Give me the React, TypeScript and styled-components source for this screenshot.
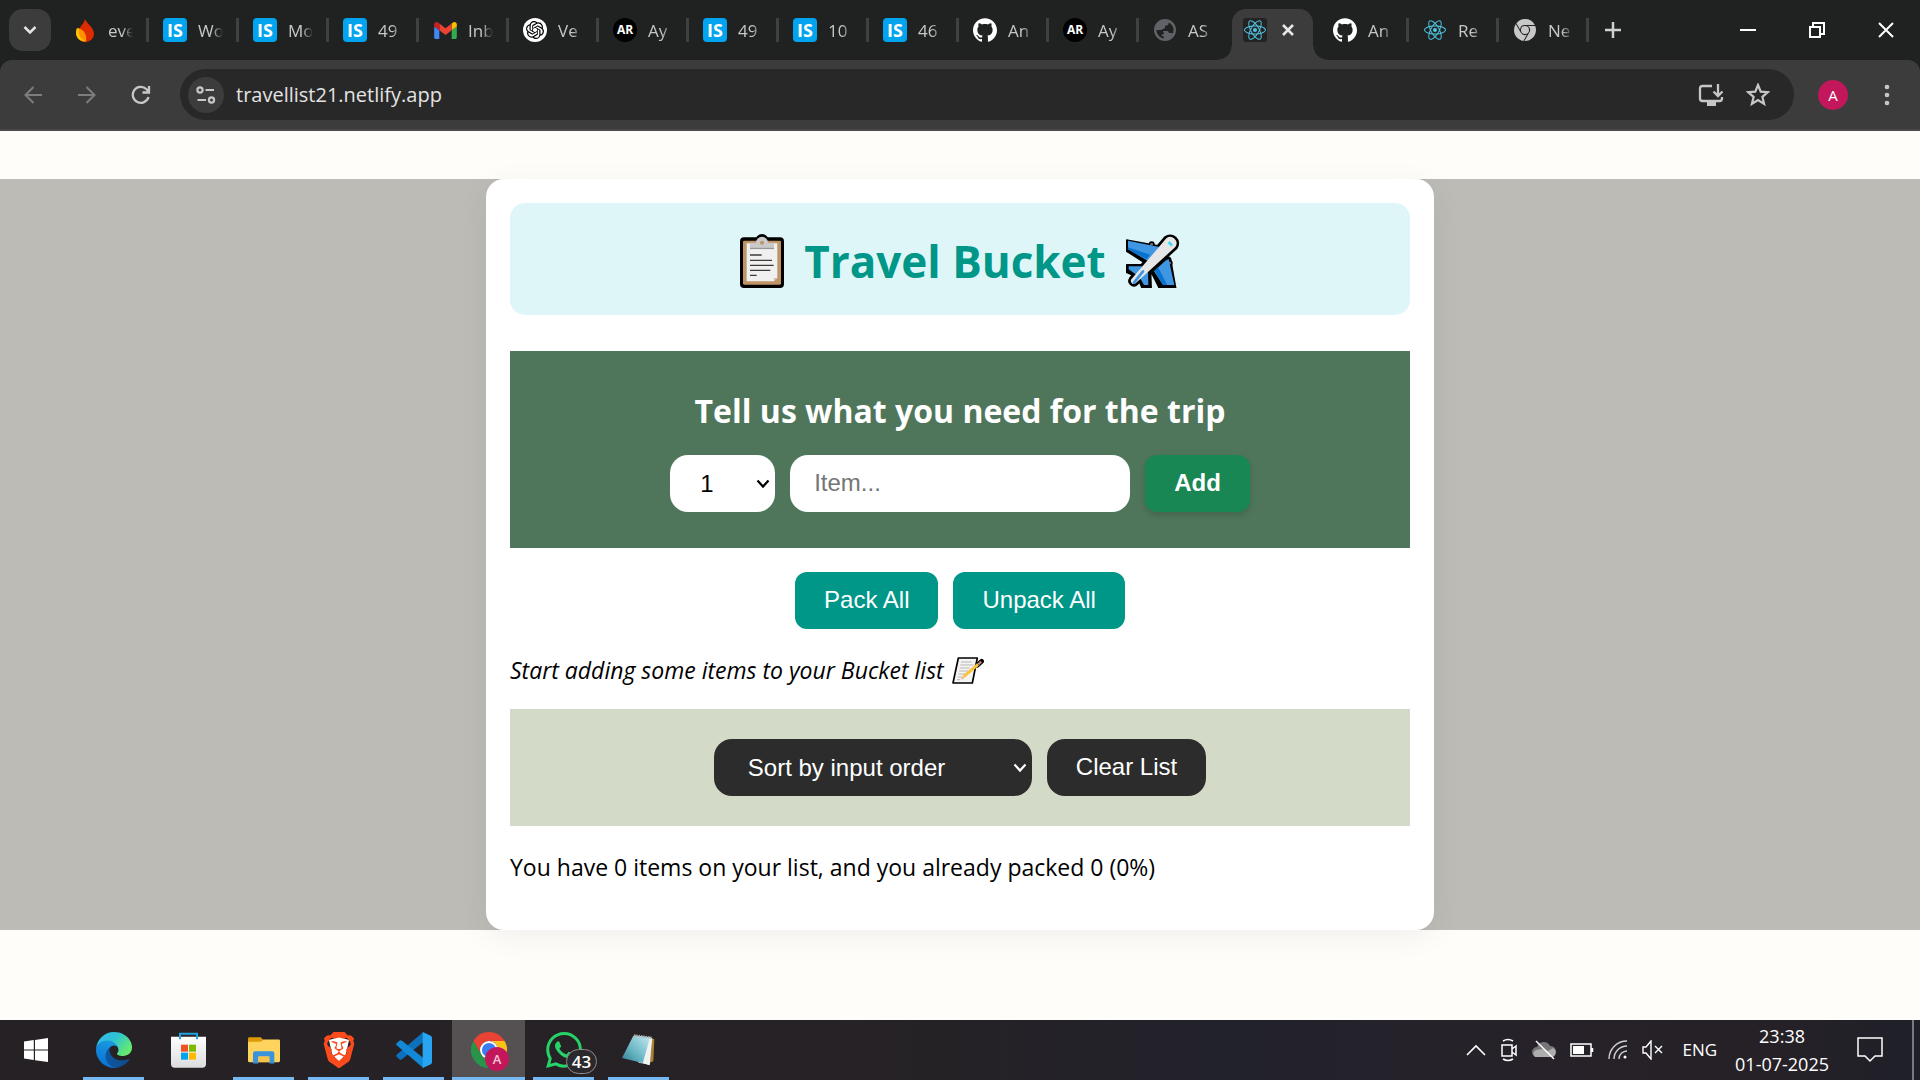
import React from "react";
import styled, { createGlobalStyle, css } from "styled-components";
import { SiBrave, SiGithub, SiGooglechrome, SiOpenai, SiReact, SiWhatsapp } from "react-icons/si";

const ui = `"Segoe UI", "Open Sans", "Noto Sans", sans-serif`;
const arial = `Arial, "Liberation Sans", sans-serif`;

const GlobalStyle = createGlobalStyle`
  *, *::before, *::after { box-sizing: border-box; }
  body { margin: 0; background: #fefdf9; font-family: ${ui}; color: #000; }
  button, input, select { margin: 0; border: 0; font: inherit; color: inherit; }
  button { background: none; padding: 0; cursor: pointer; }
  svg { display: block; flex: none; }
  h1, h2, p { margin: 0; }
`;

const Screen = styled.div`
  min-height: 100vh;
  display: flex;
  flex-direction: column;
`;

/* ---------- Browser chrome ---------- */

const TabStrip = styled.div`
  display: flex;
  align-items: center;
  height: 60px;
  background: #202222;
  color: #c7c7c7;
`;

const TabSearch = styled.button`
  display: grid;
  place-items: center;
  width: 42px;
  height: 42px;
  margin: 0 8px 0 9px;
  border-radius: 14px;
  background: #3c3c3c;
  color: #e3e3e3;
`;

const Tabs = styled.div`
  display: flex;
  align-self: stretch;
`;

const Tab = styled.button<{ $divider?: boolean }>`
  display: flex;
  align-items: center;
  gap: 11px;
  width: 90px;
  padding-left: 14px;
  font-size: 17px;
  line-height: 24px;
  background: ${(p) =>
    p.$divider
      ? "linear-gradient(#3f4141, #3f4141) right center / 3px 24px no-repeat"
      : "none"};
`;

const ActiveTab = styled.div`
  position: relative;
  display: flex;
  align-items: center;
  gap: 14px;
  width: 81px;
  height: 51px;
  margin: 9px 6px 0 3px;
  padding: 0 0 9px 11px;
  border-radius: 14px 14px 0 0;
  background: #3c3c3c;
  color: #e8e8e8;

  &::before,
  &::after {
    content: "";
    position: absolute;
    bottom: 0;
    width: 14px;
    height: 14px;
  }
  &::before {
    right: 100%;
    background: radial-gradient(circle at 0 0, transparent 13px, #3c3c3c 14px);
  }
  &::after {
    left: 100%;
    background: radial-gradient(circle at 100% 0, transparent 13px, #3c3c3c 14px);
  }
`;

const TabTitle = styled.span`
  width: 28px;
  margin-top: 2px;
  text-align: left;
  white-space: nowrap;
  mask-image: linear-gradient(90deg, #000 50%, transparent 90%);
`;

const Favicon = styled.span<{ $bg?: string; $radius?: number; $color?: string }>`
  display: grid;
  place-items: center;
  flex: none;
  width: 24px;
  height: 24px;
  border-radius: ${(p) => p.$radius ?? 0}px;
  background: ${(p) => p.$bg ?? "none"};
  color: ${(p) => p.$color ?? "#fff"};
`;

const Monogram = styled.span<{ $small?: boolean }>`
  font-family: "Open Sans", sans-serif;
  font-size: ${(p) => (p.$small ? 12 : 18)}px;
  font-weight: 700;
  line-height: 24px;
`;

const NewTab = styled.button`
  display: grid;
  place-items: center;
  width: 48px;
  color: #d0d0d0;
`;

const WindowControls = styled.div`
  display: flex;
  margin-left: auto;
  align-self: stretch;
  color: #fff;
`;

const WindowButton = styled.button`
  display: grid;
  place-items: center;
  width: 69px;
`;

const ToolbarBack = styled.div`
  background: #202222;
`;

const Toolbar = styled.div`
  display: flex;
  align-items: center;
  height: 71px;
  padding: 0 18px 0 6px;
  border-bottom: 2px solid #4a4a4a;
  border-radius: 12px 12px 0 0;
  background: #3c3c3c;
  color: #c7c7c7;
`;

const NavButton = styled.button<{ $dim?: boolean }>`
  display: grid;
  place-items: center;
  width: 54px;
  height: 42px;
  color: ${(p) => (p.$dim ? "#7d7d7d" : "#c7c7c7")};
`;

const Omnibox = styled.div`
  display: flex;
  align-items: center;
  flex: 1;
  height: 51px;
  margin-left: 12px;
  padding: 0 24px 0 8px;
  border-radius: 26px;
  background: #282828;
`;

const SiteInfo = styled.button`
  display: grid;
  place-items: center;
  width: 36px;
  height: 36px;
  margin-right: 12px;
  border-radius: 50%;
  background: #3c3c3c;
`;

const Address = styled.input`
  flex: 1;
  min-width: 0;
  padding: 0;
  background: none;
  color: #e3e3e3;
  font-size: 20px;
  line-height: 30px;
  outline: 0;
`;

const OmniboxActions = styled.div`
  display: flex;
  align-items: center;
  gap: 22px;
`;

const Avatar = styled.button`
  width: 30px;
  height: 30px;
  margin: 0 24px;
  border-radius: 50%;
  background: #c2185b;
  color: #fff;
  font-size: 15px;
  line-height: 30px;
`;

/* ---------- Page ---------- */

const Page = styled.main`
  flex: 1;
  padding: 48px 0;
  background: #fefdf9;
`;

const Band = styled.div`
  background: #bdbbb6;
`;

const Card = styled.div`
  max-width: 948px;
  margin: 0 auto;
  padding: 24px;
  border-radius: 18px;
  background: #fff;
  box-shadow: 0 6px 30px rgba(0, 0, 0, 0.06);
`;

const Header = styled.header`
  padding: 26px 24px 22px;
  border-radius: 15px;
  background: #dff6f9;
`;

const Title = styled.h1`
  display: flex;
  align-items: center;
  justify-content: center;
  gap: 20px;
  height: 64px;
  color: #009688;
  font-size: 44px;
  line-height: 64px;
  font-weight: 700;
`;

const AddForm = styled.form`
  margin-top: 36px;
  padding: 36px 24px;
  background: #4f765a;
`;

const FormTitle = styled.h2`
  margin-bottom: 20px;
  color: #fff;
  font-size: 32px;
  line-height: 48px;
  font-weight: 700;
  text-align: center;
`;

const Row = styled.div`
  display: flex;
  justify-content: center;
  flex-wrap: wrap;
  gap: 15px;
`;

const Actions = styled(Row)`
  margin: 24px 0;
`;

const controlBase = css`
  height: 57px;
  font-family: ${arial};
  font-size: 24px;
  line-height: 28px;
`;

const SelectBox = styled.div<{ $dark?: boolean }>`
  position: relative;
  color: ${(p) => (p.$dark ? "#fff" : "#000")};
`;

const Select = styled.select<{ $dark?: boolean }>`
  ${controlBase}
  appearance: none;
  width: ${(p) => (p.$dark ? 318 : 105)}px;
  padding: 0 30px 0 ${(p) => (p.$dark ? 34 : 30)}px;
  border-radius: 18px;
  background: ${(p) => (p.$dark ? "#2c2c2c" : "#fff")};
`;

const SelectArrow = styled.svg`
  position: absolute;
  top: 24px;
  right: 5px;
  pointer-events: none;
`;

const ItemInput = styled.input`
  ${controlBase}
  width: 340px;
  padding: 0 24px 2px;
  border-radius: 18px;
  background: #fff;

  &::placeholder {
    color: #757575;
    opacity: 1;
  }
`;

const Button = styled.button<{ $tone: "add" | "teal" | "dark" }>`
  ${controlBase}
  padding: 0 29px 2px;
  color: #fff;
  ${(p) =>
    ({
      add: css`
        border-radius: 12px;
        background: #198754;
        font-weight: 700;
        box-shadow: 0 3px 6px rgba(0, 0, 0, 0.15);
      `,
      teal: css`
        border-radius: 12px;
        background: #009688;
      `,
      dark: css`
        border-radius: 18px;
        background: #2c2c2c;
      `,
    })[p.$tone]}
`;

const Message = styled.p<{ $italic?: boolean }>`
  display: flex;
  align-items: center;
  gap: 8px;
  margin: 25px 0 23px;
  font-size: 23px;
  line-height: 32px;
  font-style: ${(p) => (p.$italic ? "italic" : "normal")};
`;

const SortBar = styled(Row)`
  padding: 30px;
  background: #d3dac8;
`;

/* ---------- Taskbar ---------- */

const Taskbar = styled.footer`
  display: flex;
  height: 60px;
  background: linear-gradient(90deg, #262124 0%, #262225 45%, #22222c 65%, #272229 80%, #262127 92%, #1f2029 100%);
  color: #fff;
`;

const StartButton = styled.button`
  display: grid;
  place-items: center;
  width: 72px;
`;

const Apps = styled.div`
  display: flex;
  gap: 2px;
  padding-left: 5px;
`;

const AppButton = styled.button<{ $running?: boolean; $active?: boolean }>`
  position: relative;
  display: grid;
  place-items: center;
  width: 73px;
  background: ${(p) => (p.$active ? "#555153" : "none")};

  &::after {
    content: "";
    position: absolute;
    bottom: 0;
    left: ${(p) => (p.$active ? 0 : 6)}px;
    right: ${(p) => (p.$active ? 0 : 6)}px;
    height: 3px;
    background: ${(p) => (p.$running ? "#76b9f2" : "none")};
  }
`;

const AccountBadge = styled.span`
  position: absolute;
  right: 16px;
  bottom: 9px;
  width: 24px;
  height: 24px;
  border-radius: 50%;
  background: #c2185b;
  color: #f3c6d8;
  font-size: 13px;
  line-height: 24px;
  font-weight: 600;
`;

const CountBadge = styled.span`
  position: absolute;
  right: 3px;
  bottom: 6px;
  width: 31px;
  height: 25px;
  border: 1px solid #8d8b8c;
  border-radius: 13px;
  background: #2b292b;
  font-size: 17px;
  line-height: 23px;
  font-weight: 600;
`;

const Tray = styled.div`
  display: flex;
  align-items: center;
  margin-left: auto;
`;

const TrayIcons = styled.div`
  display: flex;
  align-items: center;
  gap: 14px;
`;

const Language = styled.button`
  margin-left: 18px;
  font-size: 17px;
  line-height: 24px;
`;

const Clock = styled.div`
  margin: 0 28px 0 18px;
  font-size: 18px;
  line-height: 28px;
  text-align: center;
`;

const ShowDesktop = styled.button`
  align-self: stretch;
  width: 8px;
  margin-left: 29px;
  border-left: 2px solid #7c7a7d;
`;

/* ---------- Drawings ---------- */

const Line = ({ w, h, box, d, sw = 2 }: { w: number; h: number; box?: string; d: string; sw?: number }) => (
  <svg width={w} height={h} viewBox={box ?? `0 0 ${w} ${h}`} fill="none" stroke="currentColor" strokeWidth={sw}>
    <path d={d} />
  </svg>
);

const Flame = () => (
  <svg width="18" height="23" viewBox="0 0 18 23">
    <path d="M9 0C10 4 18 8 18 15a8.500 8 0 0 1-9 8C4 23 1 19 2 13 3 8 8 5 9 0z" fill="#dd2c00" />
    <path d="M1 9c5 1 9 4 9 13.500C4 23 0 19 0 14c0-2 .3-4 1-5z" fill="#ffc400" />
    <path d="M3 9.500c5 2 8 6 7 12.500-3-1-6-3-7-7z" fill="#ff9100" />
  </svg>
);

const Gmail = () => (
  <svg width="23" height="17" viewBox="52 42 88 66">
    <path fill="#4285f4" d="M58 108h14V74L52 59v43c0 3.320 2.690 6 6 6" />
    <path fill="#34a853" d="M120 108h14c3.320 0 6-2.690 6-6V59l-20 15" />
    <path fill="#fbbc04" d="M120 48v26l20-15v-8c0-7.420-8.470-11.650-14.400-7.200" />
    <path fill="#ea4335" d="M72 74V48l24 18 24-18v26L96 92" />
    <path fill="#c5221f" d="M52 51v8l20 15V48l-5.600-4.200c-5.940-4.450-14.400-.220-14.400 7.200" />
  </svg>
);

const Globe = () => (
  <svg width="22" height="22" viewBox="0 0 22 22">
    <circle cx="11" cy="11" r="9.800" fill="none" stroke="#5f6368" strokeWidth="2.400" />
    <path d="M11 1l4 2-1 3-3 1v2l-4 2H2c0-6 4-10 9-10z" fill="#5f6368" />
    <path d="M9 12h5l1 2h4l-3 5-6 2v-3l-3-2 3-1z" fill="#5f6368" />
  </svg>
);

const Clipboard = () => (
  <svg width="44" height="54" viewBox="0 0 132 162" role="img" aria-label="Clipboard">
    <rect y="10" width="132" height="152" rx="12" />
    <circle cx="66" cy="20" r="20" />
    <rect x="9" y="20" width="114" height="132" rx="4" fill="#bf9467" />
    <path d="M20 28h92v104l-10 10H20z" fill="#f0f0f0" />
    <path d="M112 132l-10 10v-10z" fill="#c8b8a8" />
    <path d="M30 26h18a18 18 0 0 1 36 0h18v20H30z" fill="#cacaca" />
    <path d="M30 43h72" stroke="#8c8c8c" strokeWidth="3" />
    <circle cx="66" cy="26" r="6" fill="#bf9467" />
    <path d="M30 63h35M30 79h66M30 94h71M30 109h61M30 124h20" stroke="#3b3b3b" strokeWidth="4" />
  </svg>
);

const Airplane = () => (
  <svg width="54" height="54" viewBox="0 0 162 162" role="img" aria-label="Airplane">
    <g stroke="#000" strokeWidth="16" strokeLinejoin="round">
      <path d="M4 24l90 17-32 42L4 46zM118 84l10-8 16 90h-36L84 118zM4 98h42l-16 24L4 110zM42 132l26-20 2 54H56z" />
      <path d="M148 39L29 148a9 9 0 0 1-13-12L121 13a19 19 0 0 1 27 26z" />
    </g>
    <circle cx="77" cy="31" r="9" />
    <circle cx="131" cy="87" r="9" />
    <circle cx="77" cy="31" r="4" fill="#777" />
    <circle cx="131" cy="87" r="4" fill="#777" />
    <path d="M6 20l94 19-34 42L6 46z" fill="#3f97e3" />
    <path d="M6 40l66 22-10 14L6 46z" fill="#0873cf" />
    <path d="M118 80l10-5 17 78h-34L84 112z" fill="#3f97e3" />
    <path d="M96 100l28 53h-13L86 110z" fill="#0873cf" />
    <path d="M8 97h42l-18 26L8 106zM42 132l24-22 1 43H54z" fill="#3f97e3" />
    <path d="M148 39L29 148a9 9 0 0 1-13-12L121 13a19 19 0 0 1 27 26z" fill="#e6e6e6" />
    <path d="M51 112L24 146" stroke="#3f97e3" strokeWidth="8" strokeLinecap="round" />
    <path d="M128 24l10 11" stroke="#3fd8fb" strokeWidth="8" />
  </svg>
);

const Memo = () => (
  <svg width="32" height="27" viewBox="0 0 96 81" role="img" aria-label="Memo">
    <path d="M19 3h57L61 78H3z" fill="#f4f4f4" stroke="#000" strokeWidth="5" strokeLinejoin="round" />
    <path d="M27 15h32M25 24h40M23 33h30M21 42h28M19 51h22M17 60h14M15 68h9" stroke="#b5b5b5" strokeWidth="3" />
    <path d="M89 13L76 25" stroke="#000" strokeWidth="14" strokeLinecap="round" />
    <path d="M78 22L35 59" stroke="#fcc23c" strokeWidth="9" />
    <path d="M38 64l-12 4 6-11z" fill="#e6b98d" />
    <path d="M88 14l-5 4" stroke="#d9706a" strokeWidth="7" />
    <path d="M83 18l-4 4" stroke="#aaa" strokeWidth="7" />
  </svg>
);

const WindowsLogo = () => (
  <svg width="24" height="24" viewBox="0 0 24 24" fill="#fff">
    <path d="M0 3.400l9.800-1.300v9.400H0zM11 1.900L24 0v11.500H11zM0 12.600h9.800V22L0 20.600zM11 12.600h13V24l-13-1.800z" />
  </svg>
);

const Edge = () => (
  <svg width="36" height="36" viewBox="0 0 256 256">
    <defs>
      <linearGradient id="edgeDark" x1="0" x2="1"><stop stopColor="#0c59a4" /><stop offset="1" stopColor="#114a8b" /></linearGradient>
      <linearGradient id="edgeMid" x1=".6" y1="0" x2=".3" y2="1"><stop stopColor="#1b9de2" /><stop offset="1" stopColor="#0a6fd0" /></linearGradient>
      <linearGradient id="edgeTop" x1="0" y1="0" x2="1" y2=".6"><stop stopColor="#35b8f1" /><stop offset=".5" stopColor="#2cc3d2" /><stop offset="1" stopColor="#66eb6e" /></linearGradient>
    </defs>
    <path fill="url(#edgeDark)" d="M231 190.500c-3.400 1.800-6.900 3.400-10.500 4.700a101.800 101.800 0 0 1-35.900 6.400c-47.300 0-88.500-32.500-88.500-74.300 0-11.600 6.500-22.400 16.500-28.300-42.800 1.800-53.800 46.400-53.800 72.500 0 74 68.100 81.400 82.800 81.400 7.900 0 19.800-2.300 27-4.600l1.300-.4a128.300 128.300 0 0 0 66.600-52.800 4 4 0 0 0-5.500-4.600z" />
    <path fill="url(#edgeMid)" d="M105.700 241.400c-8.900-5.500-16.600-12.800-22.700-21.300a80.700 80.700 0 0 1 29.500-120.300c3.100-1.500 8.500-4.100 15.600-4 10.100.1 19.600 5 25.700 13 4 5.400 6.300 11.900 6.400 18.700 0-.2 24.500-79.600-80-79.600-43.900 0-80 41.600-80 78.200-.2 19.300 4 38.500 12.100 56 27.600 58.800 94.900 87.700 156.600 67.200a75.400 75.400 0 0 1-63.200-8z" />
    <path fill="url(#edgeTop)" d="M152.300 148.900c-.8 1-3.300 2.500-3.300 5.700 0 2.600 1.700 5.200 4.800 7.300 14.400 10.100 41.600 8.700 41.700 8.700 10.700 0 21.200-2.900 30.400-8.300A61.800 61.800 0 0 0 256 109c.3-22.400-8-37.300-11.300-43.900C223.500 23.900 177.700 0 127.800 0A128 128 0 0 0 0 126.200c.5-36.500 36.800-66 80-66 3.500 0 23.500.3 42 10.100 16.300 8.600 24.900 18.900 30.800 29.200 6.200 10.700 7.300 24.200 7.300 29.500s-2.700 13.300-7.900 19.900z" />
  </svg>
);

const Store = () => (
  <svg width="35" height="36" viewBox="0 0 105 108">
    <defs><linearGradient id="bag" x1="0" y1="0" x2="0" y2="1"><stop stopColor="#fff" /><stop offset="1" stopColor="#dcdcdc" /></linearGradient></defs>
    <path d="M0 14h105v82a11 11 0 0 1-11 11H11A11 11 0 0 1 0 96z" fill="url(#bag)" />
    <path d="M27 22V5h51v17" fill="none" stroke="#1ea5e0" strokeWidth="6" />
    <path d="M30 38h21v21H30z" fill="#f25022" /><path d="M54 38h21v21H54z" fill="#7fba00" />
    <path d="M30 62h21v21H30z" fill="#00a4ef" /><path d="M54 62h21v21H54z" fill="#ffb900" />
  </svg>
);

const Explorer = () => (
  <svg width="32" height="27" viewBox="0 0 96 80">
    <path d="M0 4q0-4 4-4h34l7 7-6 10H0z" fill="#dd9a06" />
    <path d="M0 14h38l8-7h46q4 0 4 4v60q0 4-4 4H4q-4 0-4-4z" fill="#ffd45e" />
    <path d="M15 79V48q0-6 6-6h52q6 0 6 6v31H64V58H31v21z" fill="#3a94dc" />
    <path d="M31 75V58h33v17z" fill="#f6c34a" />
  </svg>
);

const BraveLion = () => (
  <svg width="32" height="36" viewBox="0 0 32 36">
    <path d="M6 8l10-3 10 3-3 14-7 8-7-8z" fill="#fff" />
    <SiBrave x={-2} y={0} width={36} height={36} size={36} color="#fb4a1c" />
  </svg>
);

const VsCode = () => (
  <svg width="36" height="36" viewBox="0 0 108 108">
    <path d="M2 74l8 8q4 3 8 0L82 30V0L2 68q-3 3 0 6z" fill="#0c71bb" />
    <path d="M2 34l8-8q4-3 8 0l64 52v30L2 40q-3-3 0-6z" fill="#1288d6" />
    <path d="M80 0l24 11q4 2 4 7v72q0 5-4 7l-24 11z" fill="#27a5f3" />
  </svg>
);

const Chrome = () => (
  <svg width="36" height="36" viewBox="0 0 48 48">
    <path d="M24 12h20.800A24 24 0 0 0 3.200 12l10.400 18A12 12 0 0 1 24 12z" fill="#e94335" />
    <path d="M44.800 12H24a12 12 0 0 1 10.400 18L24 48A24 24 0 0 0 44.800 12z" fill="#fbc116" />
    <path d="M3.200 12A24 24 0 0 0 24 48l10.400-18a12 12 0 0 1-20.800 0z" fill="#26954a" />
    <circle cx="24" cy="24" r="12" fill="#fff" />
    <circle cx="24" cy="24" r="9.400" fill="#3a7df0" />
  </svg>
);

const Notepad = () => (
  <svg width="33" height="32" viewBox="0 0 99 96">
    <defs><linearGradient id="pad" x1="1" y1="0" x2="0" y2="1"><stop stopColor="#c5eaf0" /><stop offset=".55" stopColor="#6db8c6" /><stop offset="1" stopColor="#2f7f92" /></linearGradient></defs>
    <path d="M88 12l9 4-3 66-12 4z" fill="#a9802f" />
    <path d="M36 4l52 6-4 82-34-6z" fill="#dfe8ea" />
    <path d="M34 5l50 6-22 76L0 72z" fill="url(#pad)" />
    <path d="M84 11L64 88l18 6 9-80z" fill="#eef3f4" />
    <path d="M36 4l52 7" stroke="#a9a9a9" strokeWidth="7" strokeDasharray="4 3" />
  </svg>
);

const Cloud = () => (
  <svg width="24" height="20" viewBox="0 0 24 20">
    <path d="M5 17a5 5 0 0 1 0-10 7 7 0 0 1 13-1 5 5 0 0 1 1 11z" fill="#777578" />
    <path d="M3 17a4 4 0 0 1 1-7l6-1 6 2 5-3a5 5 0 0 1 0 9z" fill="#adadad" />
    <path d="M4 1l18 18" stroke="#fff" strokeWidth="1.500" />
  </svg>
);

const Battery = () => (
  <svg width="24" height="14" viewBox="0 0 24 14">
    <path d="M1 1h20v12H1zM22.500 5v4" fill="none" stroke="#fff" strokeWidth="1.500" />
    <path d="M3 3h11v8H3z" fill="#fff" />
  </svg>
);

const Wifi = () => (
  <svg width="20" height="20" viewBox="0 0 20 20" fill="none" stroke="#d0d0d0" strokeWidth="1.400">
    <path d="M1 19A18 18 0 0 1 19 1M6 19A13 13 0 0 1 19 6M11 19a8 8 0 0 1 8-8" />
    <circle cx="17" cy="17" r="1.500" fill="#fff" stroke="none" />
  </svg>
);

const ArrowDown = () => (
  <SelectArrow width="14" height="10" viewBox="0 0 14 10" fill="none" stroke="currentColor" strokeWidth="2.200">
    <path d="M1.500 1.500L7 7.500l5.500-6" />
  </SelectArrow>
);

/* ---------- Tabs ---------- */

const IS = () => (
  <Favicon $bg="#00a4ef" $radius={4}><Monogram>IS</Monogram></Favicon>
);
const AR = () => (
  <Favicon $bg="#000" $radius={12}><Monogram $small>AR</Monogram></Favicon>
);
const Hub = () => (
  <Favicon><SiGithub size={24} /></Favicon>
);

const leftTabs: [React.ReactNode, string][] = [
  [<Favicon><Flame /></Favicon>, "eve"],
  [<IS />, "Wo"],
  [<IS />, "Mo"],
  [<IS />, "49"],
  [<Favicon><Gmail /></Favicon>, "Inb"],
  [<Favicon $bg="#fff" $radius={12} $color="#000"><SiOpenai size={18} /></Favicon>, "Ve"],
  [<AR />, "Ay"],
  [<IS />, "49"],
  [<IS />, "10"],
  [<IS />, "46"],
  [<Hub />, "An"],
  [<AR />, "Ay"],
  [<Favicon><Globe /></Favicon>, "AS"],
];

const rightTabs: [React.ReactNode, string][] = [
  [<Hub />, "An"],
  [<Favicon $color="#4fc3e0"><SiReact size={22} /></Favicon>, "Re"],
  [<Favicon $color="#c7c7c7"><SiGooglechrome size={22} /></Favicon>, "Ne"],
];

const Browser = () => (
  <header>
    <TabStrip>
      <TabSearch aria-label="Search tabs"><Line w={14} h={10} d="M1.500 2L7 7.500 12.500 2" sw={2.5} /></TabSearch>
      <Tabs>
        {leftTabs.map(([icon, title], i) => (
          <Tab key={i} $divider={i < leftTabs.length - 1}>
            {icon}
            <TabTitle>{title}</TabTitle>
          </Tab>
        ))}
        <ActiveTab>
          <Favicon $bg="#232323" $radius={3} $color="#4fc3e0"><SiReact size={22} /></Favicon>
          <button aria-label="Close tab"><Line w={14} h={14} d="M2 2l10 10M12 2L2 12" sw={2.5} /></button>
        </ActiveTab>
        {rightTabs.map(([icon, title], i) => (
          <Tab key={i} $divider>
            {icon}
            <TabTitle>{title}</TabTitle>
          </Tab>
        ))}
      </Tabs>
      <NewTab aria-label="New tab"><Line w={16} h={16} d="M8 0v16M0 8h16" sw={2.5} /></NewTab>
      <WindowControls>
        <WindowButton aria-label="Minimize"><Line w={16} h={16} d="M0 8h16" /></WindowButton>
        <WindowButton aria-label="Restore"><Line w={16} h={16} d="M1 5h10v10H1zM4 4V1h11v11h-3" /></WindowButton>
        <WindowButton aria-label="Close"><Line w={16} h={16} d="M1 1l14 14M15 1L1 15" /></WindowButton>
      </WindowControls>
    </TabStrip>
    <ToolbarBack>
      <Toolbar>
        <NavButton $dim aria-label="Back"><Line w={18} h={18} d="M18 9H2M9.500 1L1.500 9l8 8" /></NavButton>
        <NavButton $dim aria-label="Forward"><Line w={18} h={18} d="M0 9h16M8.500 1l8 8-8 8" /></NavButton>
        <NavButton aria-label="Reload">
          <Line w={20} h={20} d="M17.500 12A8 8 0 1 1 15.500 4.200L18 7M18 1v6.500h-6.500" sw={2.3} />
        </NavButton>
        <Omnibox>
          <SiteInfo aria-label="Site information">
            <svg width="20" height="18" viewBox="0 0 20 18" fill="none" stroke="currentColor" strokeWidth="2.200">
              <circle cx="4" cy="4" r="2.600" /><path d="M9.500 4H18M1.500 14H10" /><circle cx="15.500" cy="14" r="2.600" />
            </svg>
          </SiteInfo>
          <Address aria-label="Address" defaultValue="travellist21.netlify.app" />
          <OmniboxActions>
            <button aria-label="Install app">
              <svg width="26" height="24" viewBox="0 0 26 24" fill="none" stroke="currentColor" strokeWidth="2.300">
                <path d="M14 3H4.500Q2 3 2 5.500v10Q2 18 4.500 18h17q2.500 0 2.500-2.500V14M20 1v11M15.500 8.500L20 13l4.500-4.500" />
                <path d="M9 21h9" strokeWidth="4" />
              </svg>
            </button>
            <button aria-label="Bookmark this page">
              <Line w={24} h={24} box="1 1 22 22" d="M12 2.800l2.500 6.100 6.500.500-5 4.300 1.600 6.500-5.600-3.500-5.600 3.500L8 13.700 3 9.400l6.500-.500z" sw={2} />
            </button>
          </OmniboxActions>
        </Omnibox>
        <Avatar>A</Avatar>
        <button aria-label="Menu">
          <svg width="30" height="24" viewBox="0 0 30 24" fill="currentColor">
            <circle cx="15" cy="4" r="2.300" /><circle cx="15" cy="12" r="2.300" /><circle cx="15" cy="20" r="2.300" />
          </svg>
        </button>
      </Toolbar>
    </ToolbarBack>
  </header>
);

const Travel = () => (
  <Page>
    <Band>
      <Card>
        <Header>
          <Title><Clipboard />Travel Bucket<Airplane /></Title>
        </Header>
        <AddForm onSubmit={(e) => e.preventDefault()}>
          <FormTitle>Tell us what you need for the trip</FormTitle>
          <Row>
            <SelectBox>
              <Select aria-label="Quantity" defaultValue="1">
                {Array.from({ length: 20 }, (_, i) => (
                  <option key={i} value={i + 1}>{i + 1}</option>
                ))}
              </Select>
              <ArrowDown />
            </SelectBox>
            <ItemInput aria-label="Item" type="text" placeholder="Item..." />
            <Button $tone="add">Add</Button>
          </Row>
        </AddForm>
        <Actions>
          <Button $tone="teal">Pack All</Button>
          <Button $tone="teal">Unpack All</Button>
        </Actions>
        <Message $italic>Start adding some items to your Bucket list <Memo /></Message>
        <SortBar>
          <SelectBox $dark>
            <Select $dark aria-label="Sort order" defaultValue="input">
              <option value="input">Sort by input order</option>
              <option value="description">Sort by description</option>
              <option value="packed">Sort by packed status</option>
            </Select>
            <ArrowDown />
          </SelectBox>
          <Button $tone="dark">Clear List</Button>
        </SortBar>
        <Message>You have 0 items on your list, and you already packed 0 (0%)</Message>
      </Card>
    </Band>
  </Page>
);

const Desktop = () => (
  <Taskbar>
    <StartButton aria-label="Start"><WindowsLogo /></StartButton>
    <Apps>
      <AppButton $running aria-label="Edge"><Edge /></AppButton>
      <AppButton aria-label="Store"><Store /></AppButton>
      <AppButton $running aria-label="File Explorer"><Explorer /></AppButton>
      <AppButton $running aria-label="Brave"><BraveLion /></AppButton>
      <AppButton $running aria-label="Visual Studio Code"><VsCode /></AppButton>
      <AppButton $running $active aria-label="Chrome"><Chrome /><AccountBadge>A</AccountBadge></AppButton>
      <AppButton $running aria-label="WhatsApp"><SiWhatsapp size={36} color="#25d366" /><CountBadge>43</CountBadge></AppButton>
      <AppButton $running aria-label="Notepad"><Notepad /></AppButton>
    </Apps>
    <Tray>
      <TrayIcons>
        <Line w={20} h={12} d="M1 11l9-9 9 9" sw={1.6} />
        <Line w={18} h={24} d="M2 7h10v11H2zM12 11l4-3v9l-4-3M3 3q5-3 10 0M3 21q5 3 10 0" sw={1.5} />
        <Cloud />
        <Battery />
        <Wifi />
        <Line w={22} h={20} d="M1 7h3l5-6v18l-5-6H1zM13 6l7 7M20 6l-7 7" sw={1.4} />
      </TrayIcons>
      <Language>ENG</Language>
      <Clock>
        <div>23:38</div>
        <div>01-07-2025</div>
      </Clock>
      <button aria-label="Notifications"><Line w={26} h={26} d="M1 1h24v18h-7l-5 5-5-5H1z" sw={1.5} /></button>
      <ShowDesktop aria-label="Show desktop" />
    </Tray>
  </Taskbar>
);

export default function App() {
  return (
    <Screen>
      <GlobalStyle />
      <Browser />
      <Travel />
      <Desktop />
    </Screen>
  );
}
